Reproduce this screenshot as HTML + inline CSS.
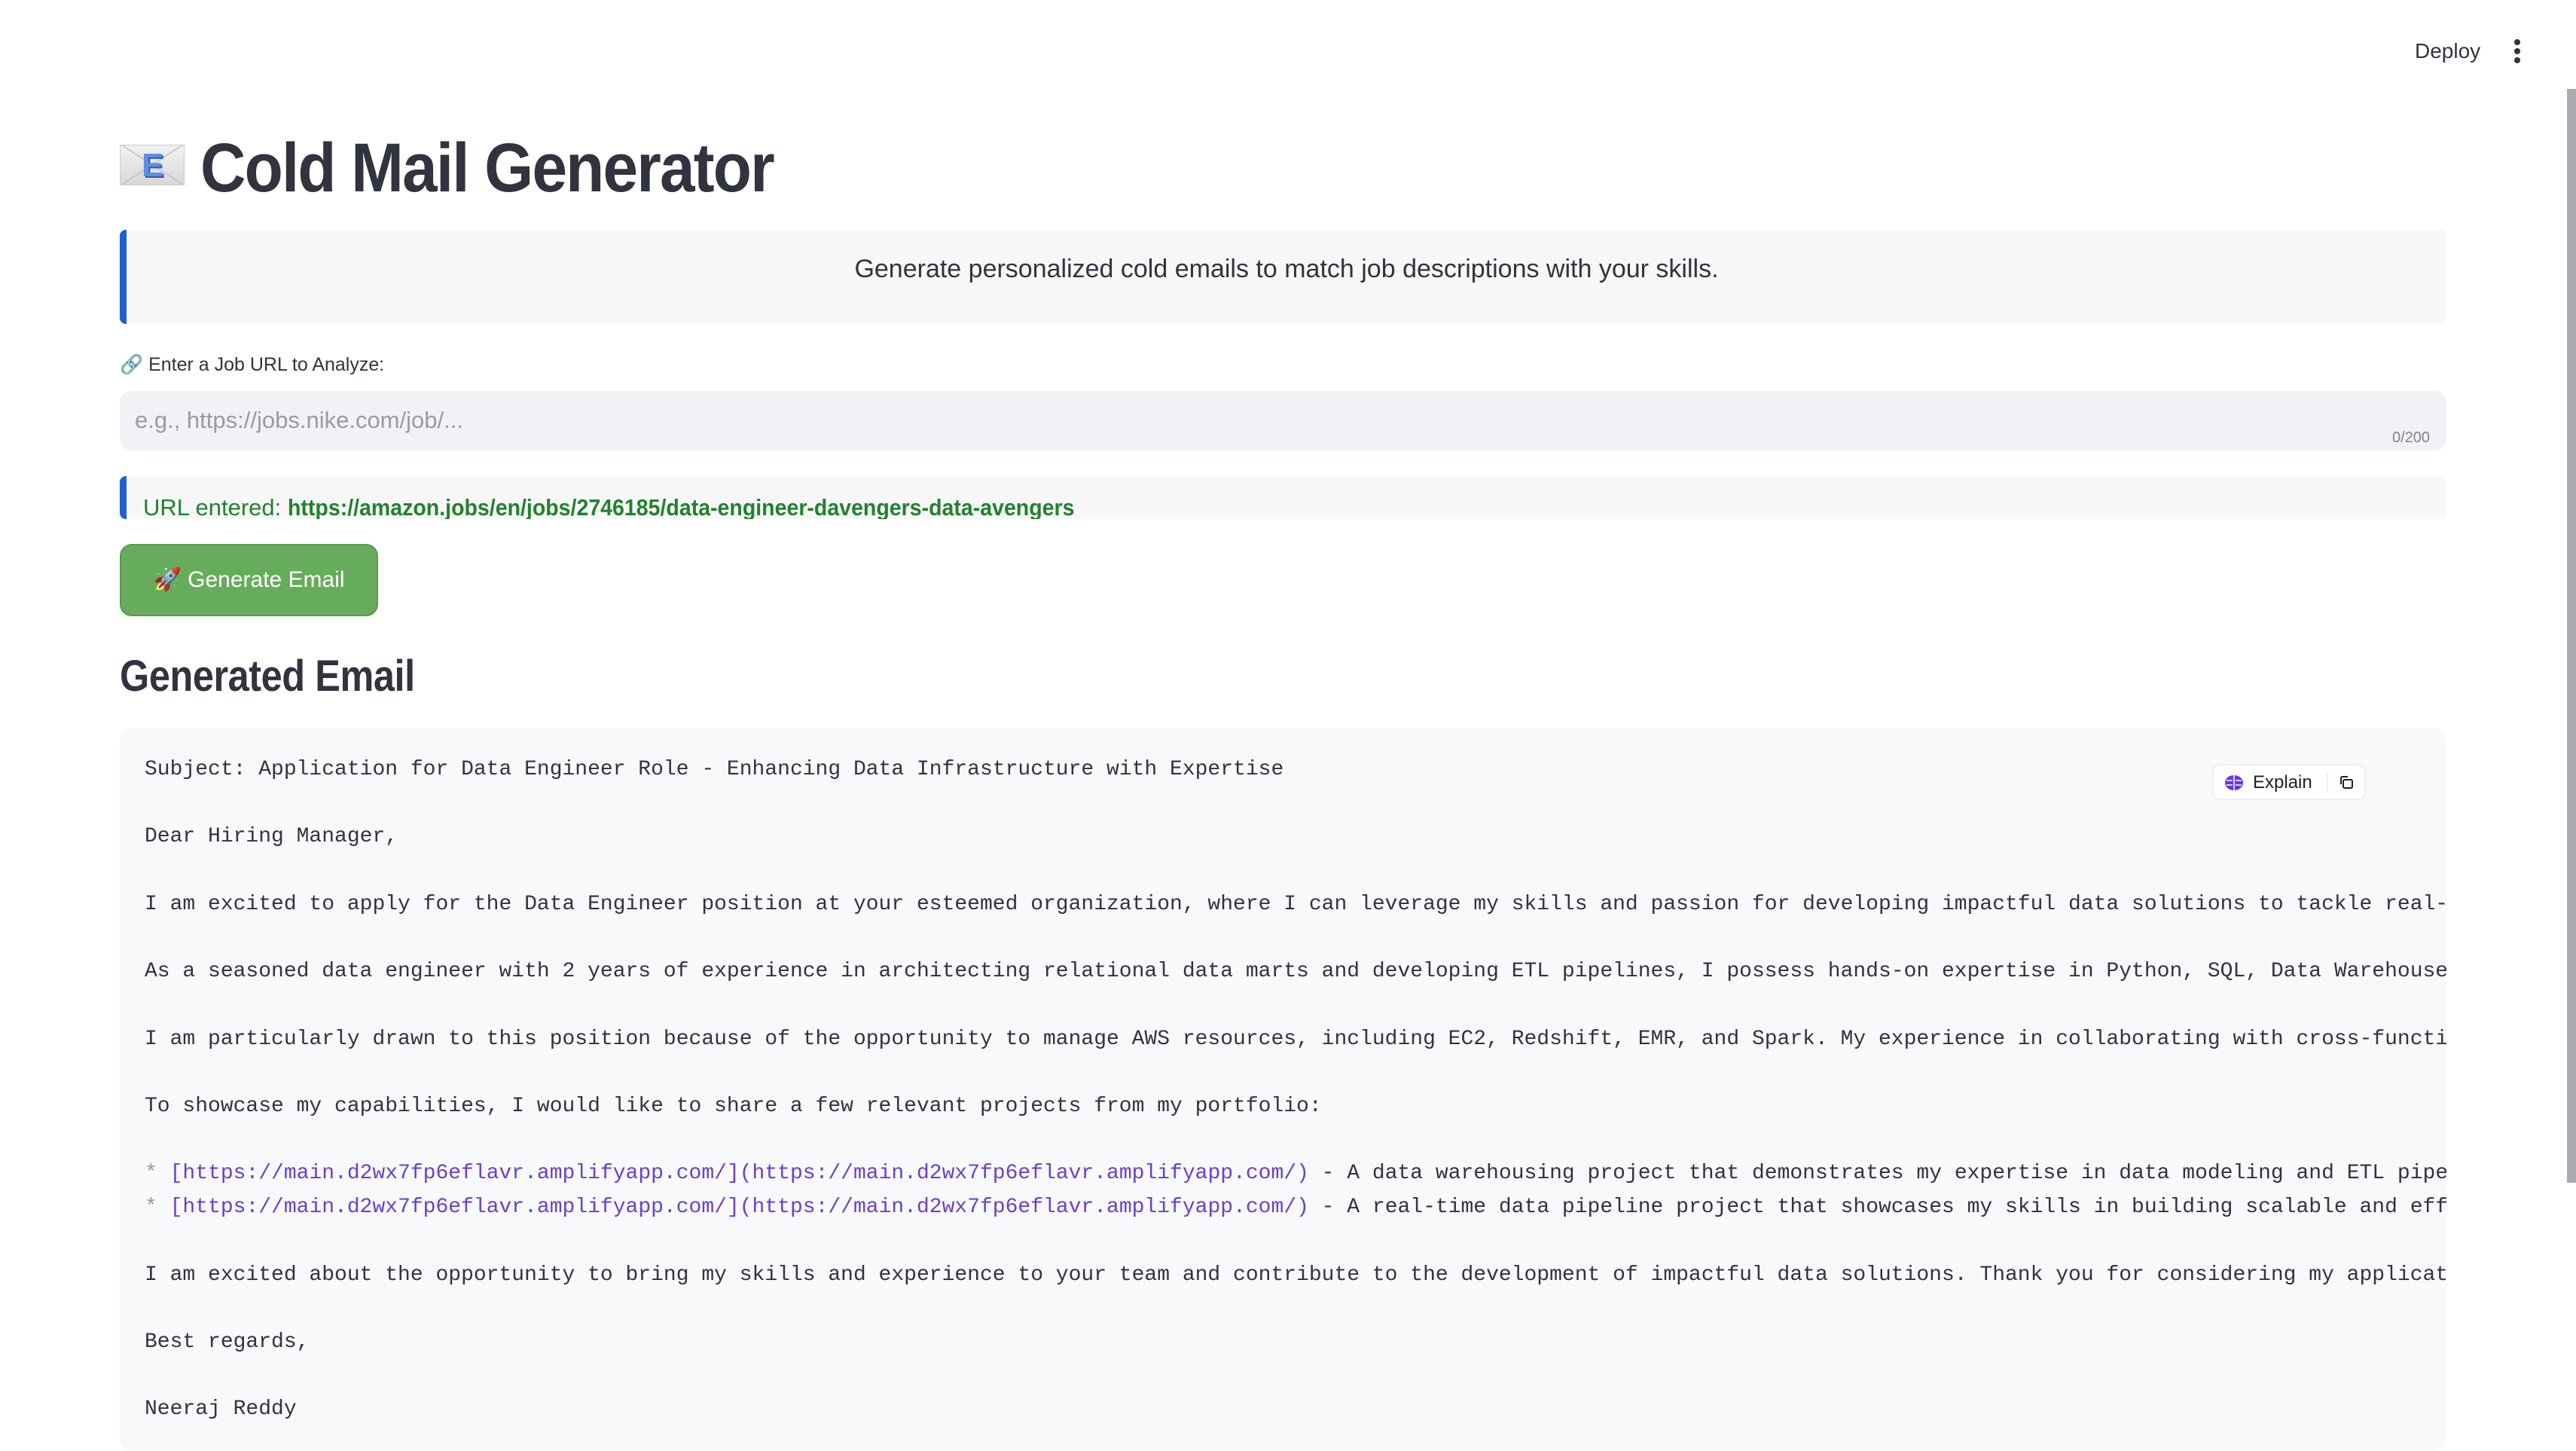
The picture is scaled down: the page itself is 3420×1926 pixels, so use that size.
<!DOCTYPE html>
<html><head><meta charset="utf-8"><style>
*{margin:0;padding:0;box-sizing:border-box}
html,body{width:3420px;height:1892px;overflow:hidden;background:#fff;font-family:"Liberation Sans","Noto Sans CJK JP",sans-serif;color:#31333f}
.a{position:absolute}
.deploy{left:3206px;top:52px;font-size:28px;color:#31333f}
.keb{left:3338px;top:52px;width:10px}
.keb i{display:block;width:8px;height:8px;border-radius:50%;background:#31333f;margin-bottom:4px}
.sb{left:3408px;top:118px;width:12px;height:1452px;background:#aaaab0}
h1{position:absolute;left:266px;top:168px;font-size:92px;font-weight:700;letter-spacing:-2px;line-height:110px;color:#31333f;transform:scaleX(0.91);transform-origin:left}
.env{left:159px;top:192px;width:86px;height:54px;background:linear-gradient(#f2f2f2,#d8d8d8);border:1px solid #ccc}
.env:before{content:"";position:absolute;left:0;top:0;width:84px;height:52px;background:linear-gradient(33deg,transparent 49%,#bbb 50%,transparent 52%),linear-gradient(-33deg,transparent 49%,#bbb 50%,transparent 52%)}
.env b{position:absolute;left:28px;top:2px;font-size:44px;color:#5b8fe6;font-weight:700;text-shadow:2px 2px 0 #2c5cb0}
.info{left:159px;top:305px;width:3089px;height:125px;background:#f7f7f8;border-left:9px solid #1f5fd3;border-radius:8px;font-size:34px;text-align:center;line-height:105px}
.lbl{left:159px;top:470px;font-size:25px}
.inp{left:159px;top:519px;width:3089px;height:79px;background:#f0f2f6;border-radius:16px}
.ph{left:179px;top:540px;font-size:31px;color:#9a9ba2}
.cnt{left:3176px;top:570px;font-size:20px;color:#808290}
.url{left:159px;top:632px;width:3089px;height:57px;background:#f7f7f8;border-left:9px solid #1f5fd3;border-radius:8px;overflow:hidden}
.url span{position:absolute;left:22px;top:24px;font-size:31px;color:#21822f;white-space:nowrap}
.url b{display:inline-block;transform:scaleX(0.92);transform-origin:left}
.btn{left:159px;top:722px;width:343px;height:96px;background:#67ac5c;border:2px solid #5a9a50;border-radius:16px;color:#fff;font-size:30px;text-align:center;line-height:92px}
h3{position:absolute;left:159px;top:864px;font-size:58px;font-weight:700;color:#31333f;letter-spacing:-0.5px;transform:scaleX(0.87);transform-origin:left}
.code{left:159px;top:966px;width:3089px;height:960px;background:#f8f9fb;border-radius:17px;overflow:hidden}
pre{position:absolute;left:33px;top:34px;font-family:"Liberation Mono",monospace;font-size:28px;line-height:44.7px;color:#31333f;white-space:pre}
.s{color:#999}.l{color:#6a3fd0}
.exp{left:2937px;top:1014px;width:204px;height:48px;background:#fff;border:2px solid #eeeef0;border-radius:10px;font-size:24px;color:#222}
</style></head><body>
<div class="a deploy">Deploy</div>
<div class="a keb"><i></i><i></i><i></i></div>
<div class="a sb"></div>
<div class="a env"><b>E</b></div>
<h1>Cold Mail Generator</h1>
<div class="a info">Generate personalized cold emails to match job descriptions with your skills.</div>
<div class="a lbl">🔗 Enter a Job URL to Analyze:</div>
<div class="a inp"></div>
<div class="a ph">e.g., https://jobs.nike.com/job/...</div>
<div class="a cnt">0/200</div>
<div class="a url"><span>URL entered: <b>https://amazon.jobs/en/jobs/2746185/data-engineer-davengers-data-avengers</b></span></div>
<div class="a btn">🚀 Generate Email</div>
<h3>Generated Email</h3>
<div class="a code"><pre>Subject: Application for Data Engineer Role - Enhancing Data Infrastructure with Expertise

Dear Hiring Manager,

I am excited to apply for the Data Engineer position at your esteemed organization, where I can leverage my skills and passion for developing impactful data solutions to tackle real-world challenges.

As a seasoned data engineer with 2 years of experience in architecting relational data marts and developing ETL pipelines, I possess hands-on expertise in Python, SQL, Data Warehouse design.

I am particularly drawn to this position because of the opportunity to manage AWS resources, including EC2, Redshift, EMR, and Spark. My experience in collaborating with cross-functional teams.

To showcase my capabilities, I would like to share a few relevant projects from my portfolio:

<span class="s">*</span> <span class="l">[https://main.d2wx7fp6eflavr.amplifyapp.com/](https://main.d2wx7fp6eflavr.amplifyapp.com/)</span> - A data warehousing project that demonstrates my expertise in data modeling and ETL pipelines.
<span class="s">*</span> <span class="l">[https://main.d2wx7fp6eflavr.amplifyapp.com/](https://main.d2wx7fp6eflavr.amplifyapp.com/)</span> - A real-time data pipeline project that showcases my skills in building scalable and efficient systems.

I am excited about the opportunity to bring my skills and experience to your team and contribute to the development of impactful data solutions. Thank you for considering my application.

Best regards,

Neeraj Reddy</pre></div>
<div class="a exp">
<svg class="a" style="left:14px;top:12px" width="26" height="22" viewBox="0 0 26 22"><ellipse cx="13" cy="11" rx="12" ry="10" fill="#6b35e0"/><path d="M13 1v20M3 8h8M15 8h8M3 14h8M15 14h8" stroke="#fff" stroke-width="1.5"/></svg>
<span class="a" style="left:52px;top:9px">Explain</span>
<span class="a" style="left:150px;top:10px;width:2px;height:26px;background:#eee"></span>
<svg class="a" style="left:166px;top:13px" width="20" height="20" viewBox="0 0 20 20" fill="none" stroke="#222" stroke-width="2"><rect x="6" y="6" width="12" height="11" rx="2"/><path d="M3 12V4a2 2 0 0 1 2-2h7"/></svg>
</div>
</body></html>
